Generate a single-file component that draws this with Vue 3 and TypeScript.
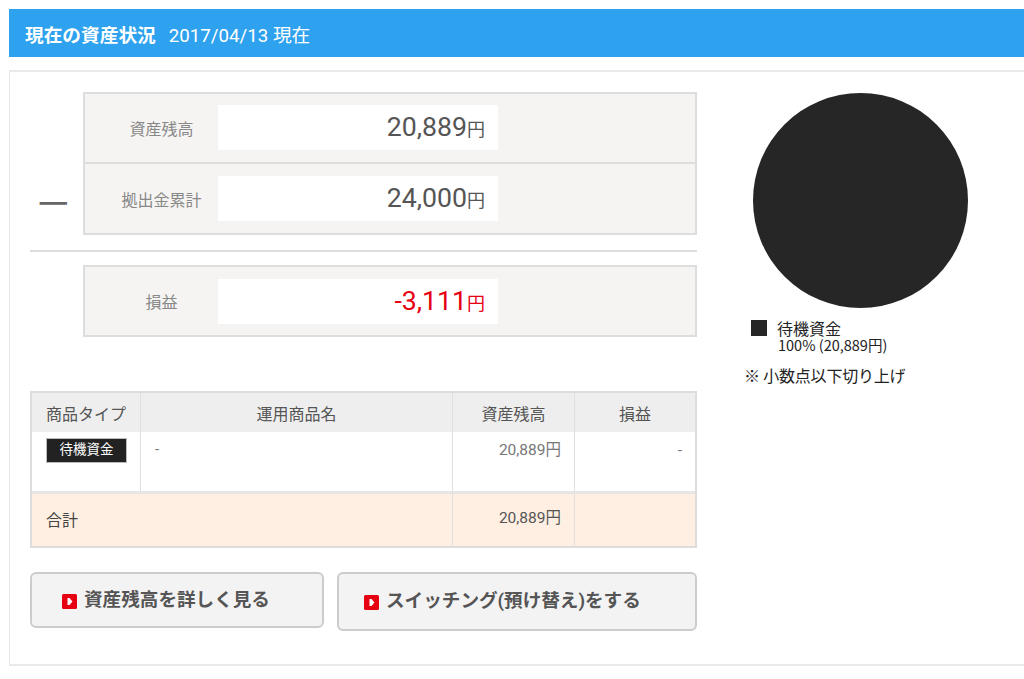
<script setup lang="ts">
interface Row { label: string; value: string; negative?: boolean }
const assets: Row[] = [
  { label: '資産残高', value: '20,889' },
  { label: '拠出金累計', value: '24,000' },
]
const profit: Row = { label: '損益', value: '-3,111', negative: true }
</script>

<template>
  <div class="page">
    <header class="title">
      <strong>現在の資産状況</strong>
      <span>2017/04/13 現在</span>
    </header>
    <section class="panel">
      <div class="left">
        <div class="sum-line">
          <div class="minus">—</div>
          <div class="box">
            <div v-for="r in assets" :key="r.label" class="box-row">
              <div class="box-label">{{ r.label }}</div>
              <div class="box-value"><b>{{ r.value }}</b><i>円</i></div>
            </div>
          </div>
        </div>
        <div class="rule"></div>
        <div class="sum-line">
          <div class="minus"></div>
          <div class="box">
            <div class="box-row">
              <div class="box-label">{{ profit.label }}</div>
              <div class="box-value neg"><b>{{ profit.value }}</b><i>円</i></div>
            </div>
          </div>
        </div>

        <table class="tbl">
          <colgroup>
            <col class="c1" /><col class="c2" /><col class="c3" /><col class="c4" />
          </colgroup>
          <thead>
            <tr><th>商品タイプ</th><th>運用商品名</th><th>資産残高</th><th>損益</th></tr>
          </thead>
          <tbody>
            <tr class="body-row">
              <td><span class="tag">待機資金</span></td>
              <td class="name">-</td>
              <td class="num">20,889円</td>
              <td class="num">-</td>
            </tr>
            <tr class="total">
              <td colspan="2">合計</td>
              <td class="num">20,889円</td>
              <td></td>
            </tr>
          </tbody>
        </table>

        <div class="buttons">
          <a class="btn b1">
            <svg class="ico" viewBox="0 0 15 15"><rect width="15" height="15" rx="1.5" fill="#e60012" /><path d="M5.500 4h2L10.500 7.500 7.500 11h-2z" fill="#fff" /></svg>
            <span>資産残高を詳しく見る</span>
          </a>
          <a class="btn b2">
            <svg class="ico" viewBox="0 0 15 15"><rect width="15" height="15" rx="1.5" fill="#e60012" /><path d="M5.500 4h2L10.500 7.500 7.500 11h-2z" fill="#fff" /></svg>
            <span>スイッチング(預け替え)をする</span>
          </a>
        </div>
      </div>

      <aside class="right">
        <div class="pie"></div>
        <div class="legend">
          <span class="swatch"></span>
          <div class="legend-text">
            <div class="l1">待機資金</div>
            <div class="l2">100% (20,889円)</div>
          </div>
        </div>
        <p class="note">※ 小数点以下切り上げ</p>
      </aside>
    </section>
  </div>
</template>

<style>
html, body { margin: 0; background: #fff; overflow: hidden; }
</style>

<style scoped>
.page {
  width: 1024px;
  height: 679px;
  padding-top: 9px;
  padding-left: 9px;
  box-sizing: border-box;
  font-family: Roboto, "Noto Sans CJK JP", sans-serif;
  color: #555;
  overflow: hidden;
}
.title {
  height: 48px;
  background: #2ea2ee;
  color: #fff;
  display: flex;
  align-items: center;
  padding-left: 16px;
  gap: 13px;
  font-size: 18.7px;
}
.title strong { font-weight: 700; }
.panel {
  margin-top: 13px;
  height: 596px;
  box-sizing: border-box;
  border: 2px solid #e9e9e9;
  border-right: 0;
  border-left-width: 1px;
  padding: 20px 0 0 20px;
  display: flex;
}
.left { width: 667px; flex: none; }
.sum-line { display: flex; align-items: flex-end; }
.minus {
  width: 45px;
  flex: none;
  font-family: "Noto Sans CJK JP", sans-serif;
  font-size: 34px;
  font-weight: 500;
  line-height: 40px;
  color: #666;
  padding-bottom: 16px;
  padding-left: 8px;
}
.box {
  width: 614px;
  box-sizing: border-box;
  border: 2px solid #ddd;
  background: #f5f4f2;
}
.box-row {
  display: flex;
  align-items: center;
  height: 68px;
  box-sizing: border-box;
}
.box-row:first-child .box-value:not(.neg) { margin-top: -2px; }
.box-row + .box-row { border-top: 2px solid #ddd; height: 71px; }
.box-label {
  width: 133px;
  flex: none;
  box-sizing: border-box;
  padding-left: 20px;
  text-align: center;
  font-size: 16px;
  color: #888;
}
.box-value {
  width: 280px;
  height: 45px;
  background: #fff;
  display: flex;
  justify-content: flex-end;
  align-items: baseline;
  box-sizing: border-box;
  padding-right: 13px;
  line-height: 45px;
  color: #555;
}
.box-value b { font-weight: 400; font-size: 26.7px; }
.box-value i { font-style: normal; font-size: 18px; }
.box-value.neg { color: #e60012; }
.rule { height: 2px; background: #ddd; margin: 15px 0 13px; }
.tbl {
  margin-top: 54px;
  width: 667px;
  table-layout: fixed;
  border-collapse: separate;
  border-spacing: 0;
  border: 2px solid #ddd;
  font-size: 16px;
}
.c1 { width: 108px; }
.c2 { width: 312px; }
.c3 { width: 122px; }
.c4 { width: 121px; }
.tbl th {
  height: 39px;
  padding: 0;
  background: #eee;
  font-weight: 400;
  color: #555;
  border-left: 1px solid #e0e0e0;
}
.tbl th:first-child, .tbl td:first-child { border-left: 0; }
.tbl td {
  border-left: 1px solid #e0e0e0;
  vertical-align: top;
  padding: 0;
}
.body-row td {
  box-sizing: border-box;
  height: 62px;
  border-bottom: 3px solid #e6e6e6;
  padding-top: 6px;
}
.tag {
  display: block;
  box-sizing: border-box;
  width: 81px;
  height: 25px;
  margin-left: 14px;
  background: #222;
  border: 1px solid #bbb;
  color: #fff;
  text-align: center;
  font-size: 13.5px;
  line-height: 21px;
}
.name { font-size: 15px; color: #777; padding-left: 14px !important; line-height: 22px; }
.num { text-align: right; font-size: 15.5px; color: #777; padding-right: 13px !important; line-height: 24px; }
.total td { background: #ffefe2; height: 52px; vertical-align: middle; color: #444; box-sizing: border-box; }
.total td:first-child { padding-left: 14px; padding-bottom: 2px; }
.total .num { color: #555; padding-bottom: 4px; }
.buttons { display: flex; gap: 13px; margin-top: 24px; align-items: flex-start; }
.btn {
  display: flex;
  align-items: center;
  box-sizing: border-box;
  background: #f3f3f3;
  border: 2px solid #ccc;
  border-radius: 6px;
  font-size: 18.6px;
  font-weight: 700;
  color: #555;
  gap: 7px;
}
.btn span { margin-bottom: 6px; }
.b1 { width: 294px; height: 56px; padding-left: 30px; }
.b2 { width: 360px; height: 59px; padding-left: 25px; }
.ico { width: 15px; height: 15px; flex: none; margin-top: 2px; }
.right { padding-left: 56px; }
.pie {
  width: 215px;
  height: 215px;
  margin-top: 1px;
  border-radius: 50%;
  background: #262626;
}
.legend { display: flex; margin-top: 12px; margin-left: -2px; font-family: "Noto Sans CJK JP", sans-serif; color: #222; }
.swatch { width: 16px; height: 16px; background: #262626; flex: none; margin-right: 10px; }
.legend-text { font-size: 16px; }
.l1 { line-height: 17px; }
.l2 { font-size: 14.5px; line-height: 15px; padding-left: 1px; }
.note { margin: 13px 0 0 -9px; line-height: 20px; font-family: "Noto Sans CJK JP", sans-serif; font-size: 16px; color: #222; letter-spacing: -0.2px; }
</style>
